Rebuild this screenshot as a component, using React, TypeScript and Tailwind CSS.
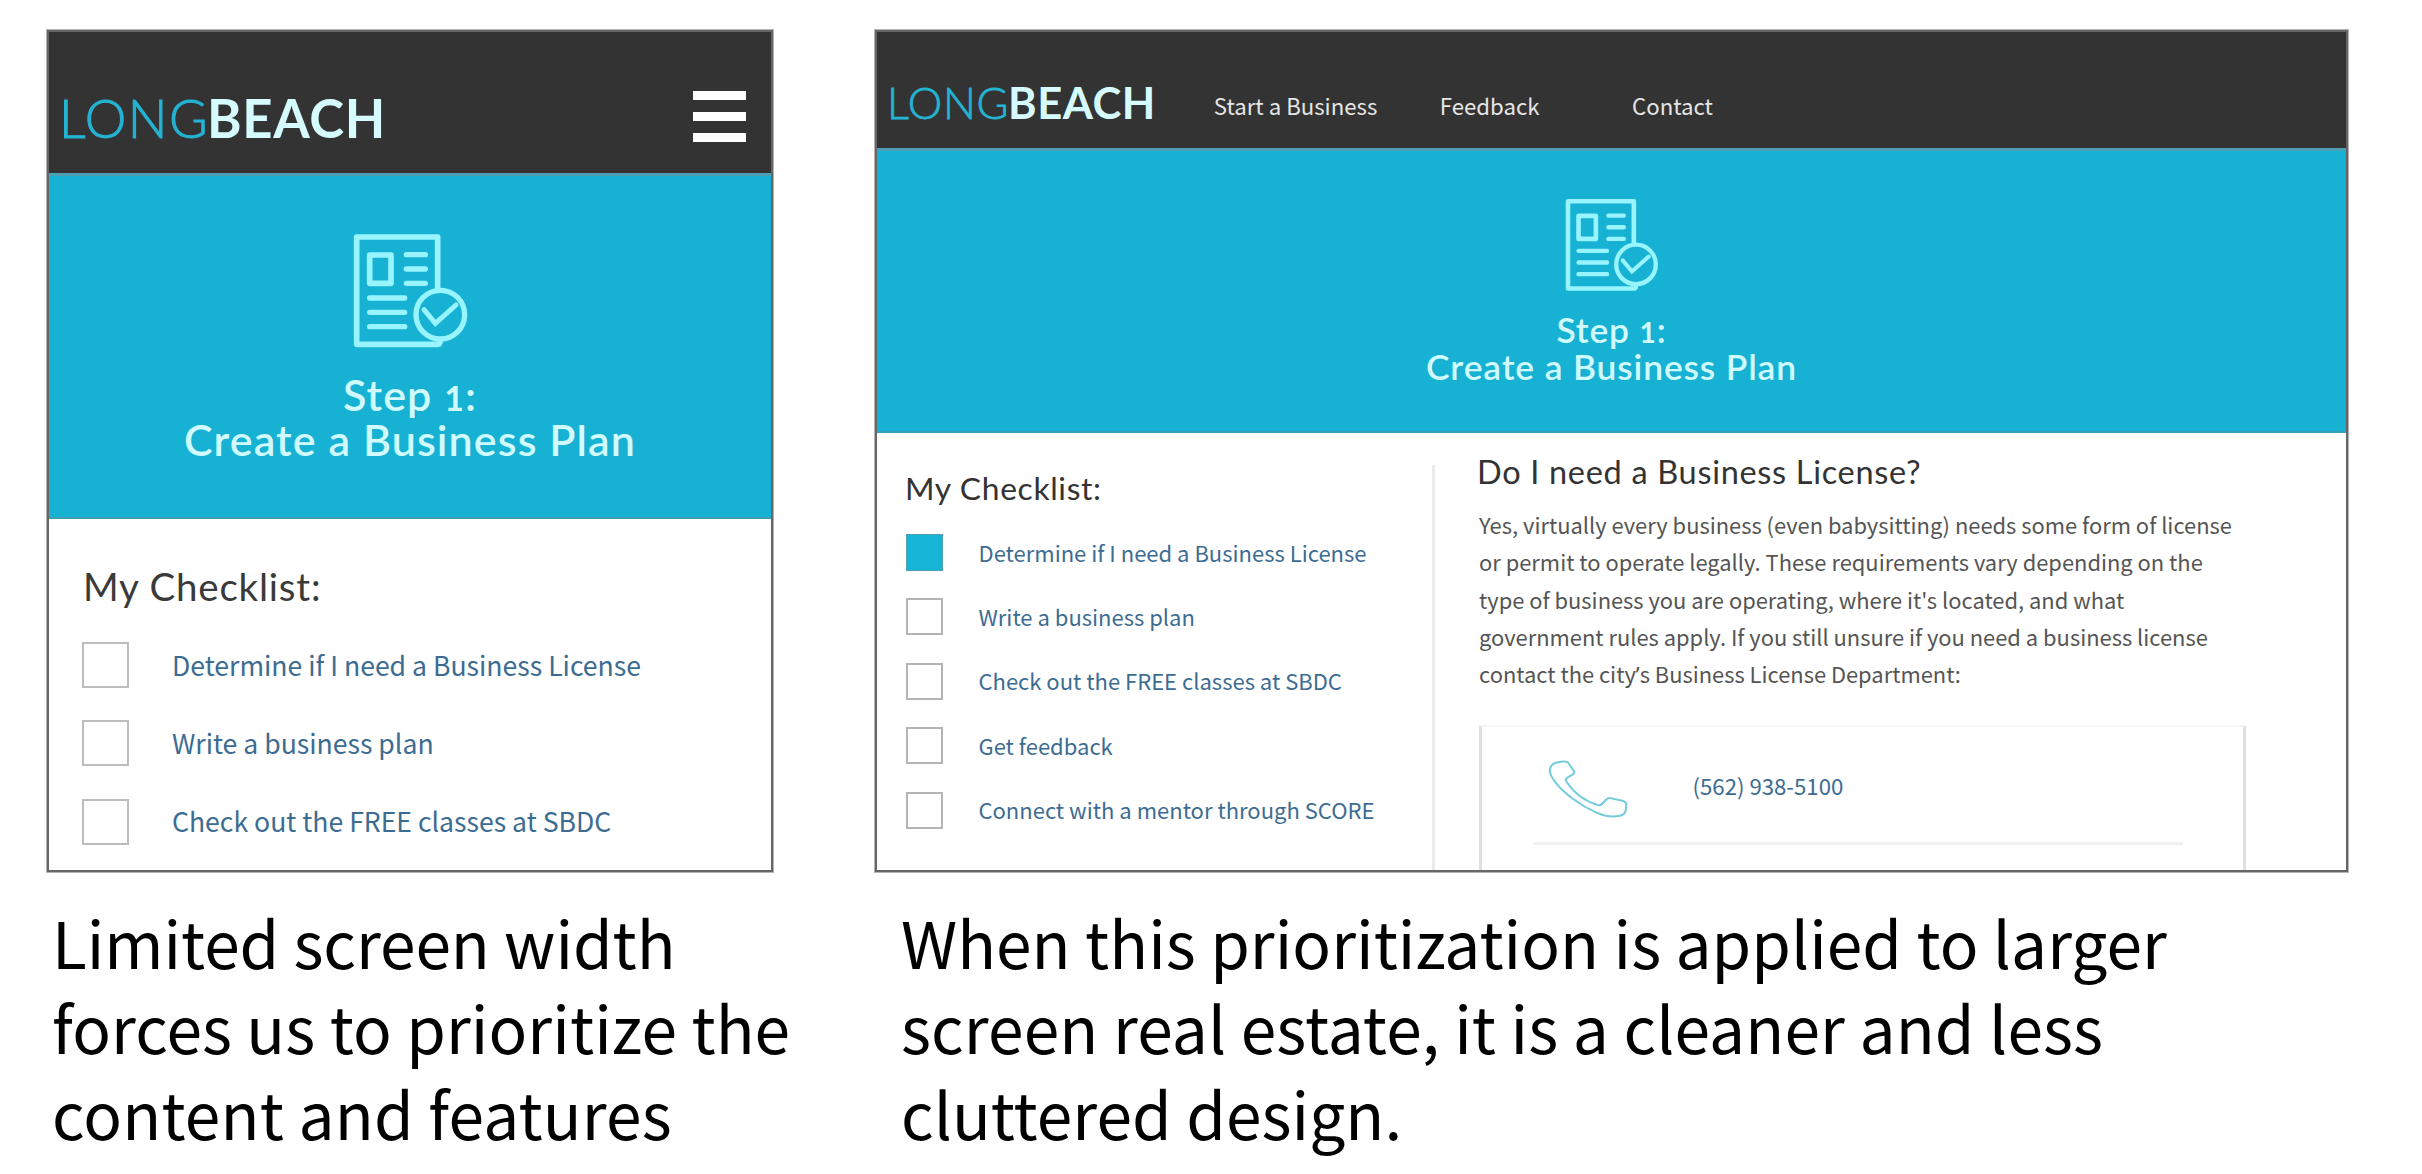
import React from "react";

const SANS = "font-['Noto_Sans_CJK_SC','Noto_Sans',sans-serif]";
const DISPLAY = "font-[Lato,sans-serif]";

function PlanIcon({ className }: { className: string }) {
  return (
    <svg viewBox="580 70 345 345" className={className} fill="none" stroke="#98f5ff" strokeLinecap="round">
      <path d="M834 238V82H591V404H834Q842 404 842 392" strokeWidth="17" strokeLinejoin="round" strokeLinecap="butt" />
      <rect x="630" y="136" width="64" height="85" strokeWidth="17" strokeLinejoin="round" />
      <path d="M740 135H797M740 178H797M740 221H797M630 265H735M630 308H735M630 351H735" strokeWidth="16" />
      <circle cx="842" cy="315" r="73" strokeWidth="16" />
      <path d="M793 300L827 341L889 286" strokeWidth="15" strokeLinejoin="miter" />
    </svg>
  );
}

function PhoneIcon({ className }: { className: string }) {
  return (
    <svg viewBox="262 180 241 175" className={className} fill="none" stroke="#74cbdd" strokeWidth="6" strokeLinejoin="round">
      <path d="M268 218C265 199 276 190 292 187C306 184 319 184 323 189L339 212Q343 219 336 224L320 233Q312 238 317 245C339 278 375 305 412 316Q420 318 425 312L437 300Q442 294 450 295L486 303Q498 306 498 315L497 328C496 345 484 349 468 350C445 352 428 348 408 339C360 318 310 281 283 246Q271 231 268 218Z" />
    </svg>
  );
}

const checklist = [
  "Determine if I need a Business License",
  "Write a business plan",
  "Check out the FREE classes at SBDC",
  "Get feedback",
  "Connect with a mentor through SCORE",
];

function MobileFrame() {
  return (
    <div className="h-[842px] w-[726px] overflow-hidden border-2 border-[#666] bg-white shadow-[0_0_0_1px_#b4b4b4]">
      <header className="flex h-[141px] items-start justify-between bg-[#333] pr-[25px] pl-[10px]">
        <div className={`${DISPLAY} flex pt-[55.5px] text-[52.6px] leading-[60px]`}>
          <span className="w-[148px] font-light tracking-[1.4px] text-[#24b3d3] [-webkit-text-stroke:1px_#24b3d3]">LONG</span>
          <span className="font-bold tracking-[0.7px] text-[#d6fbff]">BEACH</span>
        </div>
        <div className="flex flex-col gap-3 pt-[58.5px]">
          <span className="h-[9px] w-[53px] bg-white" />
          <span className="h-[9px] w-[53px] bg-white" />
          <span className="h-[9px] w-[53px] bg-white" />
        </div>
      </header>
      <section className="flex h-[346px] flex-col items-center border-t-3 border-b-2 border-t-[#4c9fb4] border-b-[#3d9fb6] bg-[#17b1d3] pt-[57px]">
        <PlanIcon className="size-[115px] shrink-0" />
        <h1 className={`${DISPLAY} mt-6 text-center text-[43px] leading-[45.3px] font-semibold tracking-[1.1px] text-[#d0fbff]`}>
          Step <span className="text-[34px] leading-none font-bold">1</span>:
          <br />
          Create a Business Plan
        </h1>
      </section>
      <section className="pt-11 pl-[33px]">
        <h2 className={`${DISPLAY} ml-px text-[38.5px] leading-[46px] tracking-[0.8px] text-[#3a3a3a]`}>My Checklist:</h2>
        <ul className="mt-[33px] flex flex-col gap-[32.4px]">
          {checklist.slice(0, 3).map((item) => (
            <li key={item} className="flex h-[46px] items-center gap-[43px]">
              <span className="h-[46px] w-[47px] border-2 border-[#bdbdbd]" />
              <span className={`${SANS} -mt-px text-[26.6px] leading-[40px] text-[#3d6c92]`}>{item}</span>
            </li>
          ))}
        </ul>
      </section>
    </div>
  );
}

function DesktopFrame() {
  return (
    <div className="h-[842px] w-[1473px] overflow-hidden border-2 border-[#666] bg-white shadow-[0_0_0_1px_#b4b4b4]">
      <header className="flex h-[116px] items-start bg-[#333] pl-[10px]">
        <div className={`${DISPLAY} flex w-[326.8px] pt-[44.5px] text-[43.5px] leading-[50px]`}>
          <span className="w-[121px] font-light tracking-[0.7px] text-[#24b3d3] [-webkit-text-stroke:0.8px_#24b3d3]">LONG</span>
          <span className="font-bold tracking-[0.5px] text-[#d6fbff]">BEACH</span>
        </div>
        <nav className={`${SANS} flex pt-[58.4px] text-[22.2px] leading-[30px] text-[#e6e6e6]`}>
          <a className="w-[226px]">Start a Business</a>
          <a className="w-[192.3px]">Feedback</a>
          <a>Contact</a>
        </nav>
      </header>
      <section className="flex h-[285px] flex-col items-center border-t-3 border-b-2 border-t-[#4c9fb4] border-b-[#3aa0b8] bg-[#17b1d3] pt-[47px]">
        <PlanIcon className="ml-px size-[93.5px] shrink-0" />
        <h1 className={`${DISPLAY} mt-[20.5px] text-center text-[35.4px] leading-[36.8px] font-semibold tracking-[0.85px] text-[#d0fbff]`}>
          Step <span className="text-[28px] leading-none font-bold">1</span>:
          <br />
          Create a Business Plan
        </h1>
      </section>
      <div className="flex">
        <section className="h-[437px] w-[555px] pt-[34.5px] pl-[27px]">
          <h2 className={`${DISPLAY} ml-px text-[31.8px] leading-[40px] tracking-[0.65px] text-[#333]`}>My Checklist:</h2>
          <ul className="mt-[26.5px] flex flex-col gap-[27.4px] pl-0.5">
            {checklist.map((item, i) => (
              <li key={item} className="flex h-[37px] items-center gap-[35.5px]">
                <span className={i === 0 ? "size-[37px] border border-[#4f9fb2] bg-[#15b5d8]" : "size-[37px] border-2 border-[#b4b4b4]"} />
                <span className={`${SANS} -mt-[2px] text-[22px] leading-[32px] text-[#3d6c92]`}>{item}</span>
              </li>
            ))}
          </ul>
        </section>
        <div className="mt-8 w-[3px] bg-[#ebebeb]" />
        <section className="pt-[19.4px] pl-[41px]">
          <h2 className={`${DISPLAY} ml-px text-[32.5px] leading-[40px] tracking-[0.68px] text-[#333]`}>Do I need a Business License?</h2>
          <p className={`${SANS} mt-[13.6px] pl-[3px] text-[21.9px] leading-[37.3px] whitespace-nowrap text-[#555]`}>
            Yes, virtually every business (even babysitting) needs some form of license
            <br />
            or permit to operate legally. These requirements vary depending on the
            <br />
            type of business you are operating, where it's located, and what
            <br />
            government rules apply. If you still unsure if you need a business license
            <br />
            contact the city<span className="font-['Noto_Sans',sans-serif] leading-none">’</span>s Business License Department:
          </p>
          <div className="mt-[32.5px] ml-[3px] h-[160px] w-[767px] border-x-3 border-t-2 border-x-[#e0e0e0] border-t-[#f5f5f5] pr-[60px] pl-[51px]">
            <div className="flex h-[118px] items-start border-b-3 border-[#f1f1f1] pl-[14.5px]">
              <PhoneIcon className="mt-[33px] h-[58px] w-[80px]" />
              <span className={`${SANS} mt-[43.2px] ml-[65px] text-[22.2px] leading-[30px] text-[#3d6c92]`}>(562) 938-5100</span>
            </div>
          </div>
        </section>
      </div>
    </div>
  );
}

export default function App() {
  return (
    <main className="flex h-[1174px] w-[2422px] gap-[102px] overflow-hidden bg-white pt-[30px] pl-[47px]">
      <figure className="w-[726px]">
        <MobileFrame />
        <figcaption className={`${SANS} flex flex-col pt-[27px] pl-[5px] text-[64px] leading-[85.33px] whitespace-nowrap text-black`}>
          <span className="tracking-[-0.05px]">Limited screen width</span>
          <span className="tracking-[0.07px]">forces us to prioritize the</span>
          <span className="tracking-[0.18px]">content and features</span>
        </figcaption>
      </figure>
      <figure className="w-[1473px]">
        <DesktopFrame />
        <figcaption className={`${SANS} flex flex-col pt-[27px] pl-[26px] text-[64px] leading-[85.33px] whitespace-nowrap text-black`}>
          <span className="tracking-[0.04px]">When this prioritization is applied to larger</span>
          <span className="tracking-[0.13px]">screen real estate, it is a cleaner and less</span>
          <span className="tracking-[0.06px]">cluttered design.</span>
        </figcaption>
      </figure>
    </main>
  );
}
